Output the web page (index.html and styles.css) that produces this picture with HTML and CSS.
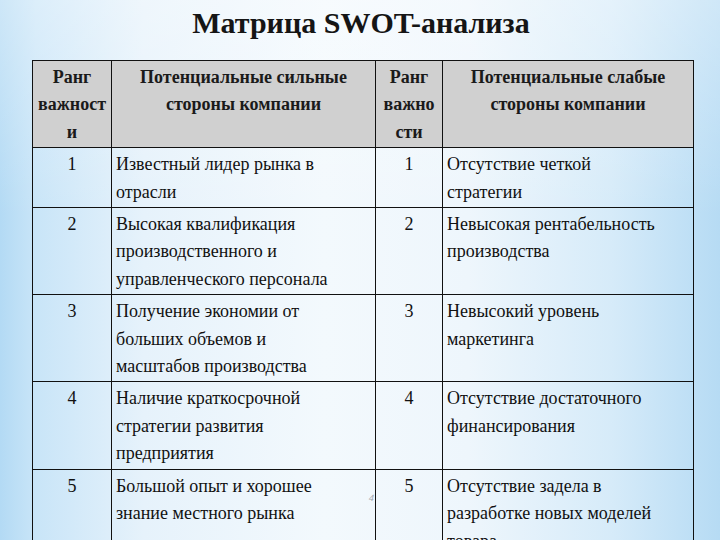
FILE: index.html
```html
<!DOCTYPE html>
<html lang="ru">
<head>
<meta charset="utf-8">
<title>Матрица SWOT-анализа</title>
<link rel="stylesheet" href="styles.css">
</head>
<body>
<div class="slide">
  <h1 class="title">Матрица SWOT-анализа</h1>
  <table class="swot">
    <colgroup>
      <col class="c-rank">
      <col class="c-strong">
      <col class="c-rank2">
      <col class="c-weak">
    </colgroup>
    <thead>
      <tr>
        <th>Ранг<br>важност<br>и</th>
        <th>Потенциальные сильные<br>стороны компании</th>
        <th>Ранг<br>важно<br>сти</th>
        <th>Потенциальные слабые<br>стороны компании</th>
      </tr>
    </thead>
    <tbody>
      <tr>
        <td class="num">1</td>
        <td>Известный лидер рынка в<br>отрасли</td>
        <td class="num">1</td>
        <td>Отсутствие четкой<br>стратегии</td>
      </tr>
      <tr>
        <td class="num">2</td>
        <td>Высокая квалификация<br>производственного и<br>управленческого персонала</td>
        <td class="num">2</td>
        <td>Невысокая рентабельность<br>производства</td>
      </tr>
      <tr>
        <td class="num">3</td>
        <td>Получение экономии от<br>больших объемов и<br>масштабов производства</td>
        <td class="num">3</td>
        <td>Невысокий уровень<br>маркетинга</td>
      </tr>
      <tr>
        <td class="num">4</td>
        <td>Наличие краткосрочной<br>стратегии развития<br>предприятия</td>
        <td class="num">4</td>
        <td>Отсутствие достаточного<br>финансирования</td>
      </tr>
      <tr>
        <td class="num">5</td>
        <td>Большой опыт и хорошее<br>знание местного рынка</td>
        <td class="num">5</td>
        <td>Отсутствие задела в<br>разработке новых моделей<br>товара</td>
      </tr>
    </tbody>
  </table>
  <span class="page-num">4</span>
</div>
</body>
</html>
```

FILE: styles.css
```css
html, body {
  margin: 0;
  padding: 0;
}

body {
  width: 720px;
  height: 540px;
  overflow: hidden;
  font-family: "Times New Roman", Tinos, "Liberation Serif", "Nimbus Roman", "FreeSerif", "Noto Serif", "DejaVu Serif", Georgia, serif;
  color: #111;
}

.slide {
  position: relative;
  width: 720px;
  height: 540px;
  overflow: hidden;
  background:
    linear-gradient(to bottom, rgba(255,255,255,0.35) 0%, rgba(255,255,255,0) 40%),
    linear-gradient(to right, #b3daf4 0%, #c9e5f8 5%, #e6f2fb 20%, #f3f9fd 45%, #eef6fc 65%, #d6ebf9 85%, #b6dbf4 100%);
}

.title {
  margin: 0 0 19px 0;
  padding-top: 5px;
  padding-left: 2px;
  height: 41px;
  box-sizing: border-box;
  line-height: 36px;
  font-family: inherit;
  font-size: 30px;
  font-weight: bold;
  text-align: center;
  color: #151515;
}

.swot {
  margin-left: 32px;
  border-collapse: collapse;
  table-layout: fixed;
  width: 662px;
  font-family: inherit;
  font-size: 18px;
  line-height: 27.4px;
}

.c-rank { width: 79px; }
.c-strong { width: 264px; }
.c-rank2 { width: 67px; }
.c-weak { width: 251px; }

.swot th,
.swot td {
  border: 1px solid #111;
  padding: 3px 4px 1px 4px;
  vertical-align: top;
  white-space: nowrap;
  overflow: hidden;
  font-family: inherit;
}

.swot th {
  background: #d0d0d0;
  font-weight: bold;
  text-align: center;
  color: #1a1a1a;
  padding-left: 0;
  padding-right: 0;
}

.swot td {
  text-align: left;
}

.swot td.num {
  text-align: center;
  padding-left: 0;
  padding-right: 0;
}

.page-num {
  position: absolute;
  left: 369px;
  top: 493px;
  font-family: "Liberation Sans", "DejaVu Sans", sans-serif;
  font-size: 9px;
  color: #9aa3ab;
  transform: skewX(-15deg);
}
```
